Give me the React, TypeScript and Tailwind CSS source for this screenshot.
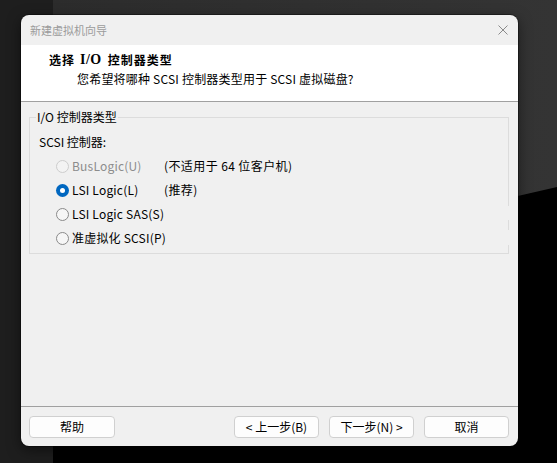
import React from 'react';

const options = [
  { label: 'BusLogic(U)', note: '(不适用于 64 位客户机)', disabled: true, checked: false },
  { label: 'LSI Logic(L)', note: '(推荐)', disabled: false, checked: true },
  { label: 'LSI Logic SAS(S)', note: '', disabled: false, checked: false },
  { label: '准虚拟化 SCSI(P)', note: '', disabled: false, checked: false },
];

const Radio = ({ checked, disabled }: { checked: boolean; disabled: boolean }) => {
  if (checked) {
    return (
      <span className="flex h-[13px] w-[13px] shrink-0 items-center justify-center rounded-full bg-[#0067c0]">
        <span className="h-[5px] w-[5px] rounded-full bg-white" />
      </span>
    );
  }
  return (
    <span
      className={
        disabled
          ? 'h-[13px] w-[13px] shrink-0 rounded-full border border-[#cdcdcd] bg-[#f3f3f3]'
          : 'h-[13px] w-[13px] shrink-0 rounded-full border border-[#8a8a8a] bg-[#f6f6f6]'
      }
    />
  );
};

const Button = ({ children, wide }: { children: React.ReactNode; wide?: boolean }) => (
  <button
    className={`${wide ? 'w-[86px]' : 'w-[85px]'} flex h-[22px] items-center justify-center rounded-[4px] border border-[#d0d0d0] bg-[#fdfdfd] text-[12px] leading-none text-black`}
  >
    {children}
  </button>
);

export default function App() {
  return (
    <div className="relative h-[463px] w-[557px] overflow-hidden bg-black font-['Noto_Sans_CJK_SC',sans-serif]">
      {/* desktop behind the dialog */}
      <div className="absolute left-0 top-0 h-full w-[53px] bg-[#1e1e1e]" />
      <div className="absolute left-[53px] top-0 h-full w-[504px] bg-gradient-to-r from-[#2c2c2c] to-[#343434] [clip-path:polygon(0_0,100%_0,100%_187px,0_303px)]" />

      {/* dialog window */}
      <div className="absolute left-[21px] top-[15px] flex h-[431px] w-[497px] flex-col overflow-hidden rounded-[8px] bg-[#f0f0f0] shadow-[0_0_0_1px_rgba(0,0,0,0.35),0_4px_14px_rgba(0,0,0,0.5)]">
        {/* title bar */}
        <div className="flex h-[30px] shrink-0 items-center justify-between pl-[9px] pr-[10px]">
          <span className="text-[11px] text-[#9b9b9b]">新建虚拟机向导</span>
          <svg width="10" height="10" viewBox="0 0 10 10" className="text-[#8a8a8a]">
            <path d="M0.5 0.5 L9.5 9.5 M9.5 0.5 L0.5 9.5" stroke="currentColor" strokeWidth="1" fill="none" />
          </svg>
        </div>

        {/* header */}
        <div className="h-[57px] shrink-0 border-b border-[#a0a0a0] bg-white pl-[28px] pt-[7px]">
          <div className="flex items-center text-[12px] font-bold leading-[16px] tracking-[1px] text-black">
            <span>选择</span>
            <span className="ml-[5px] font-['Liberation_Serif',serif] text-[14px] tracking-[0.5px]">I/O</span>
            <span className="ml-[6px]">控制器类型</span>
          </div>
          <div className="ml-[28px] mt-[3px] text-[12px] leading-[16px] tracking-[0.2px] text-black">
            您希望将哪种 SCSI 控制器类型用于 SCSI 虚拟磁盘?
          </div>
        </div>

        {/* body */}
        <div className="flex-1 px-[8px] pr-[9px] pt-[7px]">
          <fieldset className="relative h-[145px] border border-[#dcdcdc] px-[6px]">
            <legend className="px-[1px] text-[12px] leading-[16px] text-black">I/O 控制器类型</legend>
            <span className="absolute right-[-1px] top-[81px] h-[14px] w-[1px] bg-[#f0f0f0]" />
            <span className="absolute right-[-1px] top-[105px] h-[15px] w-[1px] bg-[#f0f0f0]" />
            <div className="ml-[3px] mt-[9px] text-[12px] leading-[16px] text-black">SCSI 控制器:</div>
            <div className="mt-[4px] flex flex-col">
              {options.map((o) => (
                <div key={o.label} className="ml-[20px] flex h-[24px] items-center whitespace-nowrap text-[12px]">
                  <Radio checked={o.checked} disabled={o.disabled} />
                  <span
                    className={`ml-[3px] min-w-[92px] tracking-[0.2px] ${o.disabled ? 'text-[#8c8c8c]' : 'text-black'}`}
                  >
                    {o.label}
                  </span>
                  {o.note && <span className="tracking-[0.4px] text-black">{o.note}</span>}
                </div>
              ))}
            </div>
          </fieldset>
        </div>

        {/* footer */}
        <div className="flex h-[40px] shrink-0 items-start border-t border-[#a0a0a0] pl-[8px] pr-[9px] pt-[9px]">
          <Button wide>帮助</Button>
          <div className="flex-1" />
          <div className="flex gap-[10px]">
            <Button>&lt; 上一步(B)</Button>
            <Button>下一步(N) &gt;</Button>
            <Button>取消</Button>
          </div>
        </div>
      </div>
    </div>
  );
}
